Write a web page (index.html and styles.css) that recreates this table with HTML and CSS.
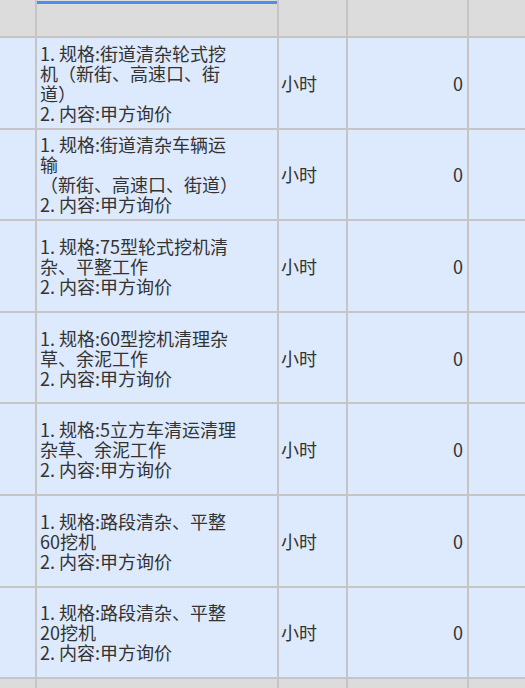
FILE: index.html
```html
<!DOCTYPE html>
<html lang="zh-CN">
<head>
<meta charset="utf-8">
<title>清单</title>
<link rel="stylesheet" href="styles.css">
</head>
<body>
<div class="sheet">
  <div class="cell head"></div>
  <div class="cell head active"></div>
  <div class="cell head"></div>
  <div class="cell head"></div>
  <div class="cell head"></div>

  <div class="cell"></div>
  <div class="cell desc">1. 规格:街道清杂轮式挖<br>机（新街、高速口、街<br>道）<br>2. 内容:甲方询价</div>
  <div class="cell unit">小时</div>
  <div class="cell num">0</div>
  <div class="cell"></div>

  <div class="cell"></div>
  <div class="cell desc">1. 规格:街道清杂车辆运<br>输<br>（新街、高速口、街道）<br>2. 内容:甲方询价</div>
  <div class="cell unit">小时</div>
  <div class="cell num">0</div>
  <div class="cell"></div>

  <div class="cell"></div>
  <div class="cell desc">1. 规格:75型轮式挖机清<br>杂、平整工作<br>2. 内容:甲方询价</div>
  <div class="cell unit">小时</div>
  <div class="cell num">0</div>
  <div class="cell"></div>

  <div class="cell"></div>
  <div class="cell desc">1. 规格:60型挖机清理杂<br>草、余泥工作<br>2. 内容:甲方询价</div>
  <div class="cell unit">小时</div>
  <div class="cell num">0</div>
  <div class="cell"></div>

  <div class="cell"></div>
  <div class="cell desc">1. 规格:5立方车清运清理<br>杂草、余泥工作<br>2. 内容:甲方询价</div>
  <div class="cell unit">小时</div>
  <div class="cell num">0</div>
  <div class="cell"></div>

  <div class="cell"></div>
  <div class="cell desc">1. 规格:路段清杂、平整<br>60挖机<br>2. 内容:甲方询价</div>
  <div class="cell unit">小时</div>
  <div class="cell num">0</div>
  <div class="cell"></div>

  <div class="cell"></div>
  <div class="cell desc">1. 规格:路段清杂、平整<br>20挖机<br>2. 内容:甲方询价</div>
  <div class="cell unit">小时</div>
  <div class="cell num">0</div>
  <div class="cell"></div>

  <div class="cell head"></div>
  <div class="cell head"></div>
  <div class="cell head"></div>
  <div class="cell head"></div>
  <div class="cell head"></div>
</div>
</body>
</html>
```

FILE: styles.css
```css
* { box-sizing: border-box; }
html, body {
  margin: 0;
  padding: 0;
  background: #dcdcdc;
  overflow: hidden;
}
.sheet {
  width: 525px;
  height: 688px;
  overflow: hidden;
  display: grid;
  grid-template-columns: 35px 240px 67px 119px 1fr;
  grid-template-rows: 36px repeat(7, 89.6px) 20px;
  gap: 2px;
  background: #c5c5c5;
  font-family: "Noto Sans CJK SC", "Noto Sans", sans-serif;
  font-size: 18px;
  line-height: 20px;
  color: #333333;
}
.cell {
  background: #dde9fc;
  display: flex;
  align-items: center;
  min-width: 0;
}
.cell.head {
  background: #dcdcdc;
}
.cell.head.active {
  background: linear-gradient(to bottom, #dcdcdc 0 1px, #4a8fe8 1px 4px, #dcdcdc 4px);
}
.desc {
  padding-left: 3px;
  white-space: nowrap;
}
.unit {
  padding-left: 2px;
}
.num {
  justify-content: flex-end;
  padding-right: 4px;
}
```
